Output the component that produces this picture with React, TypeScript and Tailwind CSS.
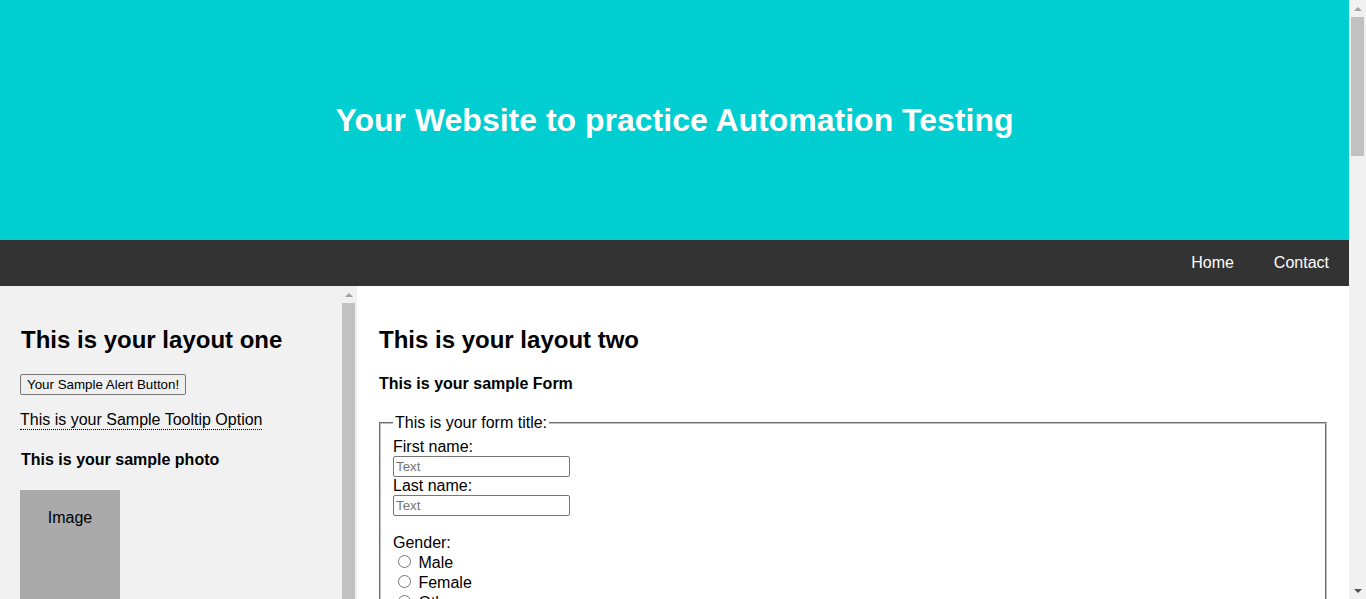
import React from "react";

function ScrollTrack({ thumb, showDown }: { thumb: string; showDown?: boolean }) {
  return (
    <div className="flex w-[17px] shrink-0 flex-col items-center bg-[#f1f1f1]">
      <div className="flex h-[17px] w-full shrink-0 items-center justify-center">
        <div className="h-0 w-0 border-x-[4px] border-b-[4px] border-x-transparent border-b-[#a3a3a3]" />
      </div>
      <div className={`w-[13px] bg-[#c1c1c1] ${thumb}`} />
      {showDown && (
        <>
          <div className="flex-1" />
          <div className="flex h-[17px] w-full shrink-0 items-center justify-center">
            <div className="h-0 w-0 border-x-[4px] border-t-[4px] border-x-transparent border-t-[#505050]" />
          </div>
        </>
      )}
    </div>
  );
}

export default function App() {
  return (
    <div className="flex h-[599px] w-[1366px] overflow-hidden bg-white font-['Liberation_Sans',Arial,sans-serif] text-[16px] leading-[normal] text-black">
      <div className="flex min-w-0 flex-1 flex-col">
        {/* header */}
        <header className="flex h-[240px] shrink-0 items-center justify-center bg-[#00ced1]">
          <h1 className="text-[32px] font-bold text-white">Your Website to practice Automation Testing</h1>
        </header>

        {/* nav */}
        <nav className="flex h-[46px] shrink-0 justify-end bg-[#333333]">
          <a className="px-[20px] py-[14px] text-white">Home</a>
          <a className="px-[20px] py-[14px] text-white">Contact</a>
        </nav>

        <div className="flex min-h-0 flex-1">
          {/* layout one */}
          <aside className="flex w-[357px] shrink-0 bg-[#f1f1f1]">
            <div className="min-w-0 flex-1 overflow-hidden p-[20px]">
              <h2 className="my-[19.92px] pl-[1px] text-[24px] font-bold">This is your layout one</h2>
              <button className="h-[21px] rounded-[2px] border border-[#767676] bg-[#efefef] px-[6px] text-[13.33px] leading-[normal]">
                Your Sample Alert Button!
              </button>
              <p className="my-[16px]">
                <span className="inline-block border-b border-dotted border-black">This is your Sample Tooltip Option</span>
              </p>
              <h4 className="my-[21.28px] pl-[1px] font-bold">This is your sample photo</h4>
              <div className="h-[200px] w-[100px] bg-[#aaaaaa] pt-[19px] text-center">Image</div>
            </div>
            <ScrollTrack thumb="flex-1" />
          </aside>

          {/* layout two */}
          <main className="min-w-0 flex-1 overflow-hidden py-[20px] pr-[22px] pl-[22px]">
            <h2 className="my-[19.92px] text-[24px] font-bold">This is your layout two</h2>
            <h4 className="my-[21.28px] font-bold">This is your sample Form</h4>
            <form>
              <fieldset className="border-2 border-[#c0c0c0] px-[12px] pt-[5.6px] pb-[10px] [border-style:groove]">
                <legend className="px-[2px]">This is your form title:</legend>
                First name:
                <br />
                <input
                  type="text"
                  placeholder="Text"
                  className="h-[21px] w-[177px] rounded-[2px] border border-[#767676] bg-white px-[2px] py-[1px] text-[13.33px] placeholder:text-[#757575]"
                />
                <br />
                Last name:
                <br />
                <input
                  type="text"
                  placeholder="Text"
                  className="h-[21px] w-[177px] rounded-[2px] border border-[#767676] bg-white px-[2px] py-[1px] text-[13.33px] placeholder:text-[#757575]"
                />
                <br />
                <br />
                Gender:
                <br />
                <input type="radio" name="gender" className="mr-[3px] ml-[5px] mt-[3px]" /> Male
                <br />
                <input type="radio" name="gender" className="mr-[3px] ml-[5px] mt-[3px]" /> Female
                <br />
                <input type="radio" name="gender" className="mr-[3px] ml-[5px] mt-[3px]" /> Other
                <br />
              </fieldset>
            </form>
          </main>
        </div>
      </div>

      {/* page scrollbar */}
      <ScrollTrack thumb="h-[139px] shrink-0" showDown />
    </div>
  );
}
